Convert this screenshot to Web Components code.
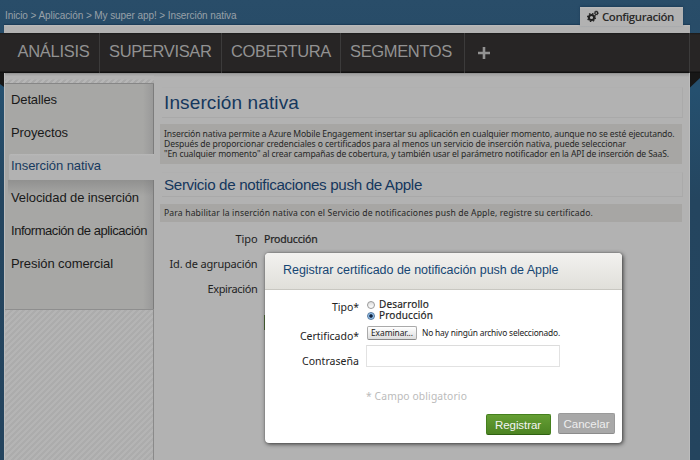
<!DOCTYPE html>
<html lang="es">
<head>
<meta charset="utf-8">
<title>Inserción nativa</title>
<style>
html,body{margin:0;width:700px;height:460px;overflow:hidden}
body{font-family:"Liberation Sans",Arial,sans-serif}
</style>
</head>
<body>
<app-shell>
  <crumb-bar slot="top"></crumb-bar>
  <nav-bar slot="nav"></nav-bar>
  <side-menu slot="side"></side-menu>
  <main-panel slot="main"></main-panel>
</app-shell>
<cert-dialog></cert-dialog>
<script>
class Base extends HTMLElement {
  constructor() {
    super();
    this.attachShadow({ mode: 'open' }).innerHTML = '<style>*{box-sizing:border-box}' + this.constructor.css + '</style>' + this.constructor.html;
  }
}

/* A single line of text tracked to the width given in "w". */
class FitText extends Base {
  static css = ':host{display:inline-block;white-space:nowrap}span{display:inline-block}';
  static html = '<span><slot></slot></span>';
  connectedCallback() {
    const w = +this.getAttribute('w'), s = this.shadowRoot.querySelector('span');
    if (!w) return;
    s.style.letterSpacing = '0px';
    const n = this.textContent.length;
    const d = (w - s.getBoundingClientRect().width) / n;
    s.style.letterSpacing = d.toFixed(3) + 'px';
  }
}
customElements.define('fit-text', FitText);

class AppShell extends Base {
  static css = `
  :host{display:grid;grid-template-rows:25px 8px 40px 1fr;width:700px;height:460px;background:linear-gradient(#294d69,#284c68 25px,#25506f 90px,#24455f 200px,#24445e)}
  .strip{background:linear-gradient(#bcbcbc,#b2b2b2 2px);margin:0 10px 0 4px;box-shadow:0 -1px 1px #1d3d59}
  .body{display:grid;grid-template-columns:4px 150px 536px 10px;min-height:0}
  .side{background:#b2b2b2;display:flex}
  .main{background:linear-gradient(#858585,#a4a4a4 1px,#a4a4a4 2px,#b2b2b2 4px);border-right:1px solid #bcbcbc}
  svg{display:block}
  `;
  static html = `<slot name="top"></slot><div class="strip"></div><slot name="nav"></slot>
  <div class="body"><svg width="4" height="14"><path d="M0 0H4V14L0 11Z" fill="#171717"/></svg>
  <div class="side"><slot name="side"></slot></div><div class="main"><slot name="main"></slot></div>
  <svg width="10" height="16"><path d="M0 0H10V5L0 14.500Z" fill="#171717"/></svg></div>`;
}

class CrumbBar extends Base {
  static css = `
  :host{display:flex;justify-content:space-between;align-items:flex-end;padding:0 17px 0 5px}
  .c{font-size:10px;line-height:18px;color:#98a1a8}
  .tab{display:flex;align-items:center;width:103px;height:19px;background:linear-gradient(#bcbcbc,#b2b2b2 2px);padding:0 0 0 7px;gap:3px;z-index:1;margin-bottom:-1px;box-shadow:0 -1px 2px #1d3d59;font:600 11.500px/18px "Open Sans","Noto Sans",sans-serif;color:#2a2a2a}
  svg{flex:none}`;
  static html = `<div class="c"><fit-text w="231.500">Inicio &gt; Aplicación &gt; My super app! &gt; Inserción nativa</fit-text></div>
  <div class="tab"><svg width="12" height="13" viewBox="0 0 12 13"><g fill="none" stroke="#222"><circle cx="4.500" cy="7.500" r="2.600" stroke-width="2"/><circle cx="4.500" cy="7.500" r="3.900" stroke-width="1.300" stroke-dasharray="1.530 1.530"/><circle cx="9.300" cy="3" r="1.400" stroke-width="1.100"/><circle cx="9.300" cy="3" r="2.100" stroke-width=".8" stroke-dasharray=".82 .82"/></g></svg><fit-text w="72">Configuración</fit-text></div>`;
}

class NavBar extends Base {
  static css = `
  :host{display:grid;grid-template-columns:100px 122px 119px 124px 225px 10px;background:linear-gradient(#1b1b1b,#272525 2px,#272525 38px,#111 39px);font-size:16.500px;line-height:37px;color:#929292}
  div{padding-left:9px;border-right:1px solid #3c3b3b}
  div:first-of-type{padding-left:17.500px}
  .p{padding:14px 0 0 13px;line-height:0}
  .e{border:0}`;
  static html = `<div><fit-text w="72">ANÁLISIS</fit-text></div><div><fit-text w="102.500">SUPERVISAR</fit-text></div><div><fit-text w="100">COBERTURA</fit-text></div><div><fit-text w="102">SEGMENTOS</fit-text></div>
  <div class="p"><svg width="12" height="12"><path d="M4.700 0H7.300V4.700H12V7.300H7.300V12H4.700V7.300H0V4.700H4.700Z" fill="#929292"/></svg></div><div class="e"></div>`;
}

class SideMenu extends Base {
  static css = `
  :host{display:grid;grid-template-rows:10px 227px 1fr;width:150px;border-left:1px solid #bcbcbc;font-size:13px;color:#191919}
  .h{background:repeating-linear-gradient(135deg,#acacac 0 1.500px,#b4b4b4 2.100px 3.600px,#acacac 4.240px);border-right:1px solid #8a8a8a}
  .t{background:linear-gradient(#858585,#a4a4a4 1px,#a4a4a4 2px,#b2b2b2 3px,#b2b2b2 6px,transparent 7px),repeating-linear-gradient(135deg,#a9a9a9 0 1.500px,#b6b6b6 2.100px 3.600px,#a9a9a9 4.240px);border:0}
  .m{background:linear-gradient(90deg,#a7a7a500 138px,#989898),#a7a7a5;border-top:1px solid #868686;border-bottom:1px solid #8e8e8e;display:grid;grid-template-rows:70px 26px 32px 33px 1fr;align-content:start}
  .i{padding-left:6px;line-height:32px;border-right:1px solid #7c7c7c}
  .first{display:grid;grid-template-rows:33px 33px;height:70px}
  .a{height:26px;line-height:24px;margin-left:4px;padding-left:2px;background:linear-gradient(#b8b8b8,#b2b2b2 2px);color:#173a5f;border-radius:2px 0 0 2px;border:0}
  .s{line-height:36px;background:linear-gradient(#7777,#7770 16px) 3px 0 no-repeat}
  .j{line-height:37px}
  .l{line-height:38px}`;
  static html = `<div class="h t"></div><div class="m">
  <div class="i first"><fit-text w="46">Detalles</fit-text><fit-text w="57">Proyectos</fit-text></div>
  <div class="i a"><fit-text w="90">Inserción nativa</fit-text></div>
  <div class="i s"><fit-text w="128">Velocidad de inserción</fit-text></div>
  <div class="i j"><fit-text w="136">Información de aplicación</fit-text></div>
  <div class="i l"><fit-text w="102">Presión comercial</fit-text></div></div><div class="h"></div>`;
}

class PageHeading extends Base {
  static css = `:host{display:block;height:var(--h);border:1px solid #aaa;border-left:0;border-top-color:#b0b0b0;border-bottom-color:#a9a9a9;color:#15375d;padding-left:2px}`;
  static html = '<slot></slot>';
}
class NoteBox extends Base {
  static css = `:host{display:flex;flex-direction:column;background:#a7a6a4;color:#262626;font:8.600px/10px "Noto Sans",sans-serif;padding:5px 0 0 4px;width:522px}`;
  static html = '<slot></slot>';
}
class MainPanel extends Base {
  static css = `
  :host{display:block;padding:14px 6px 0 6px}
  page-heading{margin-left:2px}
  .h1{--h:31px;font-size:19px;line-height:29px}
  .h2{--h:25px;font-size:15.200px;line-height:24px;margin-top:8px}
  note-box{margin-top:6px;height:40px}
  .n2{height:18px;margin-top:7px;padding-top:4px}
  .rows{display:grid;grid-template-columns:97.500px 1fr;column-gap:6.500px;grid-auto-rows:25px;font:11px/22px "Noto Sans",sans-serif;margin-top:6px;color:#222;text-align:right}
  .v{text-align:left;font-size:10.500px;-webkit-text-stroke:.2px #222}
  .g{height:15px;width:20px;margin-top:12px;background:#42652a}`;
  static html = `<page-heading class="h1"><fit-text w="135">Inserción nativa</fit-text></page-heading>
  <note-box><fit-text w="510.500">Inserción nativa permite a Azure Mobile Engagement insertar su aplicación en cualquier momento, aunque no se esté ejecutando.</fit-text><fit-text w="462">Después de proporcionar credenciales o certificados para al menos un servicio de inserción nativa, puede seleccionar</fit-text><fit-text w="505">"En cualquier momento" al crear campañas de cobertura, y también usar el parámetro notificador en la API de inserción de SaaS.</fit-text></note-box>
  <page-heading class="h2"><fit-text w="258">Servicio de notificaciones push de Apple</fit-text></page-heading>
  <note-box class="n2"><fit-text w="429">Para habilitar la inserción nativa con el Servicio de notificaciones push de Apple, registre su certificado.</fit-text></note-box>
  <div class="rows"><fit-text w="22">Tipo</fit-text><fit-text class="v" w="53.500">Producción</fit-text><fit-text w="88">Id. de agrupación</fit-text><span></span><fit-text w="50">Expiración</fit-text><span></span><span></span><div class="g"></div></div>`;
}

class RadioOption extends Base {
  static css = `:host{display:flex;gap:4px;height:11px;align-items:center;font-size:10px;line-height:11px;-webkit-text-stroke:.15px #222}
  i{width:8px;height:8px;border-radius:50%;border:1px solid #999;background:linear-gradient(#ddd,#fff);flex:none}
  :host([checked]) i{border-color:#57799e;background:radial-gradient(circle,#10223c 1.300px,#8cbbe8 2.200px,#b5dcf8)}`;
  static html = '<i></i><slot></slot>';
}
class ActionButton extends Base {
  static css = `:host{display:block;height:21px;border-radius:2px;border:1px solid #45801d;border-bottom-color:#2f6111;background:linear-gradient(#659f34,#4c8322);color:#f4f4f4;font-size:11.500px;line-height:20px;text-align:center}
  :host([muted]){background:#a8a8a8;border-color:#9a9a9a;border-bottom-color:#8c8c8c;color:#eee}`;
  static html = '<slot></slot>';
}
class CertDialog extends Base {
  static css = `
  :host{position:absolute;left:265px;top:253px;width:357px;height:190px;background:#fff;border-radius:4px;box-shadow:0 0 1px #555,1px 1px 4px #333;overflow:hidden;display:grid;grid-template-rows:37px 1fr 29px;font-family:"Noto Sans",sans-serif;color:#222}
  header{background:linear-gradient(#f2f1ef,#e0dfda);border-bottom:1px solid #c8c7c1;padding-left:18px;font:12.500px/34px "Liberation Sans",Arial,sans-serif;color:#164673}
  .f{display:grid;grid-template-columns:94px 1fr;column-gap:7px;grid-template-rows:29px 25px 25px 1fr;padding-top:6px;font-size:10.500px}
  .l{text-align:right;line-height:22px}
  .r{padding:3px 0 0 1px}
  .file{display:flex;gap:5px;align-items:flex-start;font-size:8.400px;line-height:13px;padding:1px 0 0 1px}
  .b{height:14px;width:50px;border:1px solid #aaa;border-bottom-color:#888;border-radius:2px;background:linear-gradient(#fff,#ddd);text-align:center;line-height:12px}
  .in{margin-top:-5px;width:194px;height:22px;border:1px solid #e2e2e2;border-top-color:#dcdcdc}
  .o{font-size:10.300px;line-height:16px;color:#bbb;padding-top:13px}
  footer{display:grid;grid-template-columns:65px 57px;gap:7.500px;justify-content:end;padding-right:7px}
  action-button[muted]{margin-top:-1px}
  footer{font-family:"Liberation Sans",Arial,sans-serif}`;
  static html = `<header><fit-text w="275.500">Registrar certificado de notificación push de Apple</fit-text></header>
  <div class="f">
  <div class="l"><fit-text w="27">Tipo*</fit-text></div><div class="r"><radio-option><fit-text w="50">Desarrollo</fit-text></radio-option><radio-option checked><fit-text w="54">Producción</fit-text></radio-option></div>
  <div class="l"><fit-text w="59">Certificado*</fit-text></div><div class="file"><div class="b"><fit-text w="42">Examinar...</fit-text></div><fit-text w="138">No hay ningún archivo seleccionado.</fit-text></div>
  <div class="l"><fit-text w="57">Contraseña</fit-text></div><div class="in"></div>
  <span></span><div class="o"><fit-text w="101">* Campo obligatorio</fit-text></div></div>
  <footer><action-button><fit-text w="46">Registrar</fit-text></action-button><action-button muted><fit-text w="46">Cancelar</fit-text></action-button></footer>`;
}
for (const [n, c] of Object.entries({ 'page-heading': PageHeading, 'note-box': NoteBox, 'radio-option': RadioOption, 'action-button': ActionButton, 'crumb-bar': CrumbBar, 'nav-bar': NavBar, 'side-menu': SideMenu, 'main-panel': MainPanel, 'app-shell': AppShell, 'cert-dialog': CertDialog })) customElements.define(n, c);
</script>
</body>
</html>
